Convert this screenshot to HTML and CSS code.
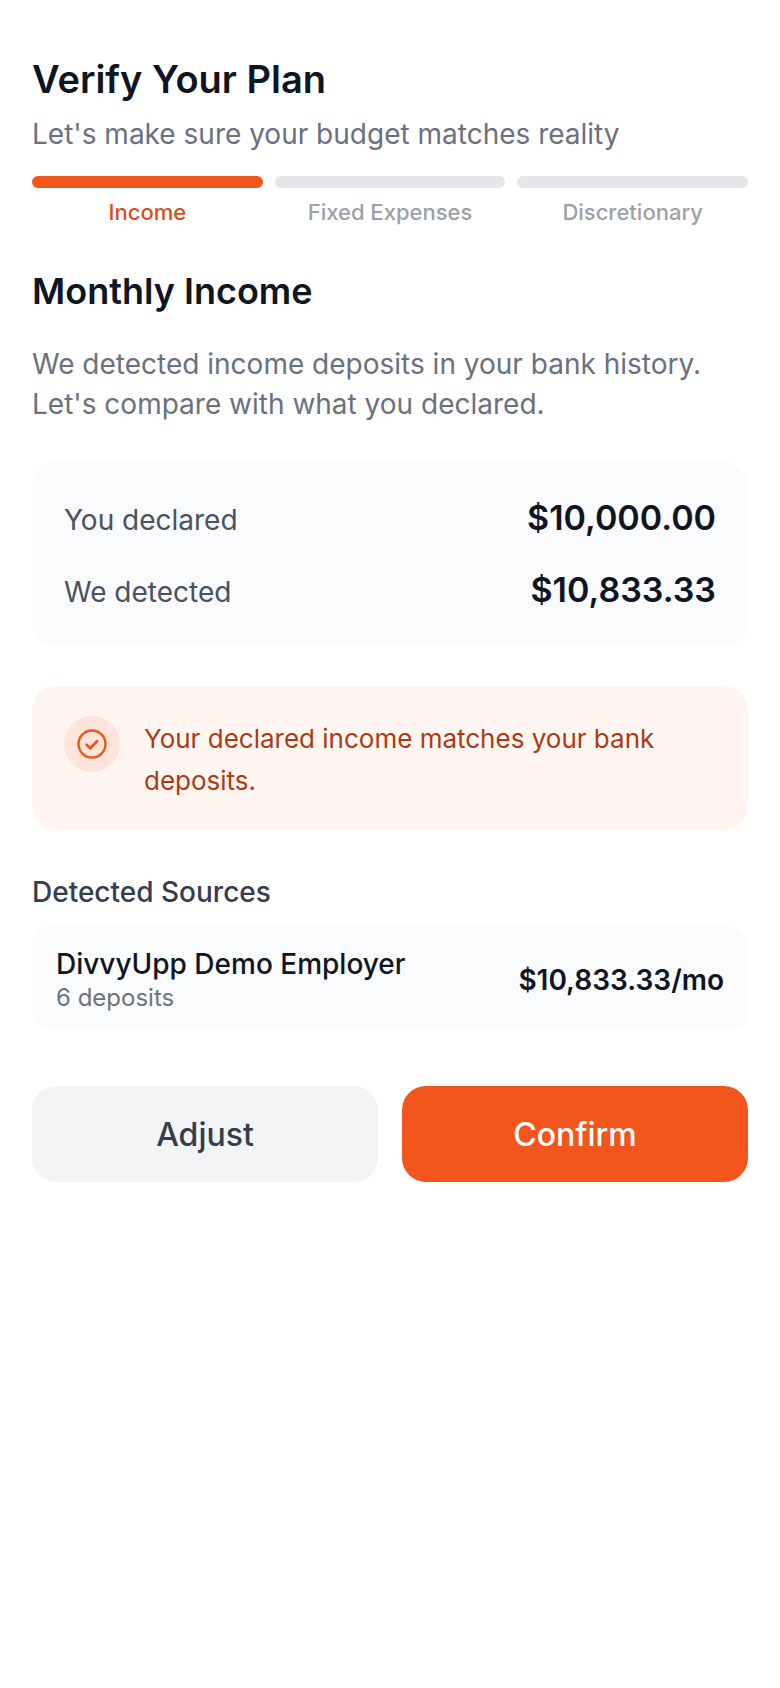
FILE: index.html
```
<!DOCTYPE html>
<html lang="en">
<head>
  <meta charset="UTF-8">
  <meta name="viewport" content="width=device-width, initial-scale=1.0">
  <title>Verify Your Plan</title>
  <link rel="stylesheet" href="styles.css">
</head>
<body>
  <main class="page">
    <header>
      <h1>Verify Your Plan</h1>
      <p class="subtitle">Let's make sure your budget matches reality</p>
    </header>

    <ol class="steps">
      <li class="step active" aria-current="step">Income</li>
      <li class="step">Fixed Expenses</li>
      <li class="step">Discretionary</li>
    </ol>

    <section>
      <h2>Monthly Income</h2>
      <p class="intro">We detected income deposits in your bank history. Let's compare with what you declared.</p>

      <dl class="summary">
        <div class="summary-row">
          <dt>You declared</dt>
          <dd>$10,000.00</dd>
        </div>
        <div class="summary-row">
          <dt>We detected</dt>
          <dd>$10,833.33</dd>
        </div>
      </dl>

      <div class="notice">
        <span class="notice-icon">
          <svg viewBox="0 0 32 32" fill="none" stroke="currentColor" stroke-linecap="round" stroke-linejoin="round" aria-hidden="true">
            <circle cx="16" cy="16" r="13.5" stroke-width="2.4"/>
            <path d="M10.6 16.8l3.6 3.4 6.8-7" stroke-width="2.8"/>
          </svg>
        </span>
        <p>Your declared income matches your bank deposits.</p>
      </div>
    </section>

    <section>
      <h3>Detected Sources</h3>
      <div class="source">
        <div>
          <p class="source-name">DivvyUpp Demo Employer</p>
          <p class="source-count">6 deposits</p>
        </div>
        <span class="source-amount">$10,833.33/mo</span>
      </div>
    </section>

    <div class="actions">
      <button type="button" class="btn">Adjust</button>
      <button type="button" class="btn btn-primary">Confirm</button>
    </div>
  </main>
</body>
</html>
```
FILE: styles.css
```
* {
  box-sizing: border-box;
}
body {
  margin: 0;
  background: #fff;
  color: #101524;
  font-family: Inter, "Liberation Sans", sans-serif;
  font-size: 28px;
  line-height: 40px;
}
h1, h2, h3, p, ol, dl, dd {
  margin: 0;
}
.page {
  padding: 54px 32px;
}
h1 {
  font-size: 38px;
  line-height: 50px;
  font-weight: 600;
}
.subtitle {
  margin-top: 10px;
  color: #6b7080;
}
.steps {
  display: grid;
  grid-template-columns: repeat(3, 1fr);
  gap: 12px;
  margin-top: 22px;
  padding: 0;
  list-style: none;
}
.step {
  color: #9ca0aa;
  font-size: 22px;
  line-height: 32px;
  font-weight: 500;
  text-align: center;
}
.step::before {
  content: "";
  display: block;
  height: 12px;
  margin-bottom: 8px;
  border-radius: 6px;
  background: #e4e6e9;
}
.step.active {
  color: #d94e1b;
}
.step.active::before {
  background: #f3561d;
}
h2 {
  margin-top: 38px;
  font-size: 36px;
  line-height: 50px;
  font-weight: 600;
}
.intro {
  margin-top: 28px;
  color: #6b7080;
}
.summary {
  display: grid;
  gap: 32px;
  margin-top: 38px;
  padding: 36px 32px;
  border-radius: 24px;
  background: #f9fbfc;
}
.summary-row {
  display: flex;
  justify-content: space-between;
  align-items: baseline;
  height: 40px;
}
.summary dt {
  color: #4b5160;
}
.summary dd {
  font-size: 34px;
  font-weight: 600;
}
.notice {
  display: flex;
  gap: 24px;
  margin-top: 40px;
  padding: 30px 32px 28px;
  border-radius: 24px;
  background: #fff6f2;
  color: #ab3b12;
  font-size: 26px;
  line-height: 42px;
}
.notice p {
  padding-top: 2px;
}
.notice-icon {
  display: flex;
  flex: none;
  align-items: center;
  justify-content: center;
  width: 56px;
  height: 56px;
  border-radius: 50%;
  background: #ffe4da;
  color: #eb5520;
}
.notice-icon svg {
  width: 32px;
  height: 32px;
}
h3 {
  margin-top: 42px;
  color: #363c4c;
  font-size: 28px;
  font-weight: 500;
}
.source {
  display: flex;
  justify-content: space-between;
  align-items: center;
  margin-top: 14px;
  padding: 20px 24px 16px;
  border-radius: 20px;
  background: #f9fbfc;
}
.source-name {
  line-height: 36px;
  font-weight: 500;
}
.source-count {
  color: #6f737d;
  font-size: 24px;
  line-height: 32px;
}
.source-amount {
  font-weight: 600;
}
.actions {
  display: grid;
  grid-template-columns: 1fr 1fr;
  gap: 24px;
  margin-top: 56px;
}
.btn {
  height: 96px;
  border: none;
  border-radius: 24px;
  background: #f2f4f6;
  color: #363c4c;
  font-family: inherit;
  font-size: 32px;
  font-weight: 500;
  cursor: pointer;
}
.btn-primary {
  background: #f3561d;
  color: #fff;
}
```
